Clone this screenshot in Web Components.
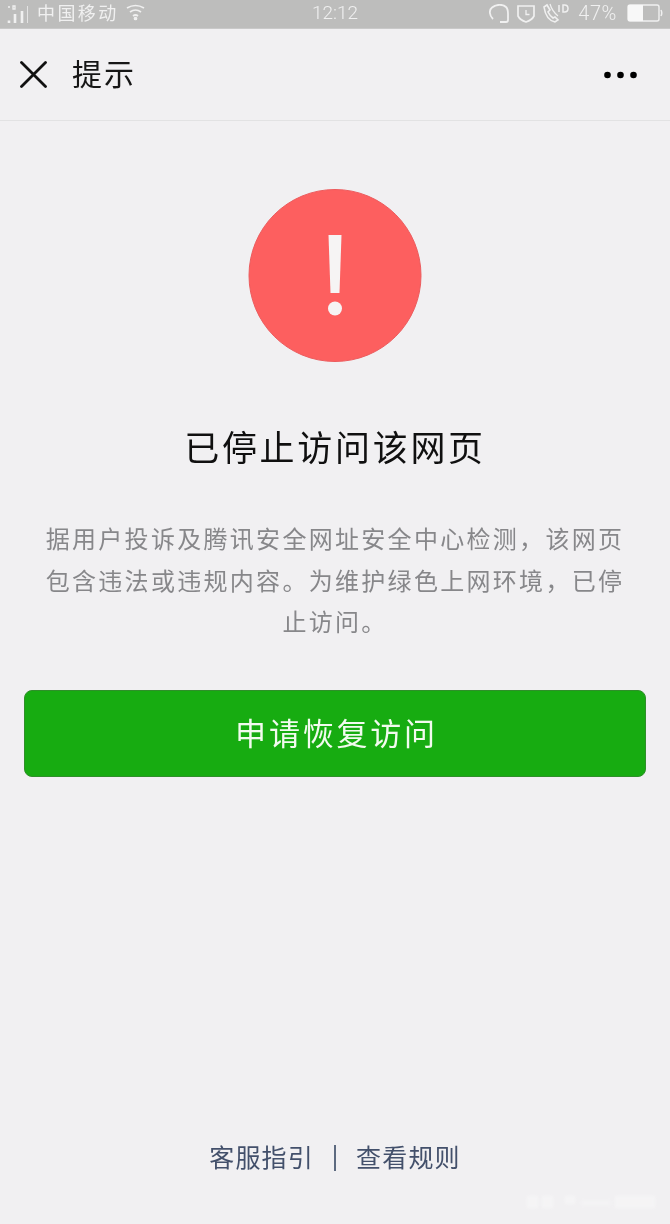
<!DOCTYPE html>
<html lang="zh-CN">
<head>
<meta charset="utf-8">
<title>提示</title>
<style>
    html, body {
        margin: 0;
        height: 100%;
        background: #f1f0f2;
        font-family: "Noto Sans CJK SC", "Liberation Sans", sans-serif;
    }
    msg-page {
        height: 1224px;
    }
</style>
</head>
<body>
<msg-page>
    <status-bar slot="status" carrier="中国移动" time="12:12" battery="47%"></status-bar>
    <nav-bar slot="nav">提示</nav-bar>
    <warn-icon slot="icon"></warn-icon>
    <span slot="title">已停止访问该网页</span>
    <span slot="desc">据用户投诉及腾讯安全网址安全中心检测，该网页包含违法或违规内容。为维护绿色上网环境，已停止访问。</span>
    <primary-button slot="action">申请恢复访问</primary-button>
    <footer-links slot="footer">
        <a>客服指引</a>
        <a>查看规则</a>
    </footer-links>
</msg-page>

<script>
class StatusBar extends HTMLElement {
    constructor() {
        super();
        this.attachShadow({mode: "open"});
        this.shadowRoot.appendChild(StatusBar.TEMPLATE.content.cloneNode(true));
    }

    connectedCallback() {
        this.shadowRoot.querySelector("#carrier").textContent = this.getAttribute("carrier");
        this.shadowRoot.querySelector("#time").textContent = this.getAttribute("time");
        this.shadowRoot.querySelector("#battery").textContent = this.getAttribute("battery");
    }
}
StatusBar.TEMPLATE = document.createElement("template");
StatusBar.TEMPLATE.innerHTML = `
    <style>
        :host {
            display: grid;
            grid-template-columns: 1fr auto 1fr;
            align-items: center;
            height: 29px;
            padding: 0 7px;
            background: #bdbdbc;
            border-bottom: 1px solid #c9c9c9;
            box-sizing: border-box;
            color: #f0f0f0;
            font-size: 18px;
            line-height: 24px;
        }
        .left, .right {
            display: flex;
            align-items: center;
        }
        .right {
            justify-content: flex-end;
        }
        svg {
            display: block;
            fill: none;
            stroke: #f0f0f0;
        }
        #carrier {
            margin: 0 7px 4px 9px;
            letter-spacing: 2.400px;
        }
        #time {
            padding-bottom: 3px;
            font-family: "Roboto", sans-serif;
            font-weight: 300;
            font-size: 19px;
        }
        #battery {
            margin: 0 10px 2px 8px;
            font-family: "Roboto", sans-serif;
            font-weight: 300;
            font-size: 20px;
            letter-spacing: 0.6px;
        }
    </style>
    <div class="left">
        <svg width="21" height="19" viewBox="0 0 21 19">
            <path d="M2 15.500V18M8 9v9M15 6v12" stroke-width="2.600"/>
            <path d="M21 1v17" stroke-width="1.500"/>
            <path d="M1 2h2M6 1h2v3H6z" stroke-width="1.300"/>
        </svg>
        <span id="carrier"></span>
        <svg width="19" height="17" viewBox="0 0 19 17" stroke-width="1.700" style="margin-bottom: 3px">
            <path d="M1 4q8.500-5 17 0"/>
            <path d="M4 8q5.500-4 11 0"/>
            <path d="M7 12q2.500-2 5 0"/>
            <circle cx="9.500" cy="14.500" r="1" fill="#f0f0f0"/>
        </svg>
    </div>
    <span id="time"></span>
    <div class="right">
        <svg width="20" height="19" viewBox="0 0 20 19" stroke-width="1.800" style="margin-bottom: 2px">
            <path d="M4 15C0 11 0 6 3 3.500 7 0 14 0 17 3c2.500 2.500 2 6 2 9v4q0 2-2 2h-6"/>
        </svg>
        <svg width="18" height="19" viewBox="0 0 18 19" stroke-width="1.700" style="margin: 0 0 2px 8px">
            <path d="M1 2h16v10q-2 4-8 6-6-2-8-6z"/>
            <path d="M9 6v4.500h3.500" stroke-width="1.300"/>
        </svg>
        <svg width="27" height="20" viewBox="0 0 27 20" stroke-width="1.600" style="margin: 0 0 2px 8px">
            <path d="M1 4l3-2 3 5-2 2q2 4 5 6l2-1 3 3-3 2Q3 17 1 4z"/>
            <path d="M7 1q2 7 8 12" stroke-width="1.200"/>
            <path d="M16 2v7M20 2h1.500q3.500 0 3.500 3.500t-3.500 3.500H20z" stroke-width="1.500"/>
        </svg>
        <span id="battery"></span>
        <svg width="36" height="18" viewBox="0 0 36 18" style="margin-bottom: 2px">
            <rect x="1" y="1" width="31" height="16" rx="2" stroke-width="1.400"/>
            <rect x="1" y="1" width="15" height="16" fill="#f8f8f8" stroke="none"/>
            <path d="M34 6q1.500 3 0 6" stroke-width="1.500"/>
        </svg>
    </div>
`;
customElements.define("status-bar", StatusBar);

class NavBar extends HTMLElement {
    constructor() {
        super();
        this.attachShadow({mode: "open"});
        this.shadowRoot.appendChild(NavBar.TEMPLATE.content.cloneNode(true));
    }
}
NavBar.TEMPLATE = document.createElement("template");
NavBar.TEMPLATE.innerHTML = `
    <style>
        :host {
            display: flex;
            align-items: center;
            height: 92px;
            padding: 0 33px 0 20px;
            box-sizing: border-box;
            border-bottom: 1px solid #e2e2e3;
            color: #161616;
            font-size: 30px;
        }
        .title {
            flex: 1;
            margin-left: 25px;
            padding-bottom: 6px;
            letter-spacing: 2px;
        }
        svg {
            display: block;
        }
    </style>
    <svg width="27" height="27" viewBox="0 0 27 27" fill="none" stroke="#111" stroke-width="2.800" stroke-linecap="round">
        <path d="M1.500 1.500l24 24M25.500 1.500l-24 24"/>
    </svg>
    <div class="title"><slot></slot></div>
    <svg width="33" height="8" viewBox="0 0 33 8" fill="#000">
        <circle cx="3.500" cy="4" r="3.300"/>
        <circle cx="16.500" cy="4" r="3.300"/>
        <circle cx="29.500" cy="4" r="3.300"/>
    </svg>
`;
customElements.define("nav-bar", NavBar);

class WarnIcon extends HTMLElement {
    constructor() {
        super();
        this.attachShadow({mode: "open"});
        this.shadowRoot.appendChild(WarnIcon.TEMPLATE.content.cloneNode(true));
    }
}
WarnIcon.TEMPLATE = document.createElement("template");
WarnIcon.TEMPLATE.innerHTML = `
    <style>
        :host {
            display: block;
            width: 174px;
            height: 173px;
        }
        svg {
            display: block;
        }
    </style>
    <svg width="174" height="173" viewBox="0 0 174 173">
        <circle cx="87" cy="86.500" r="86" fill="#fd5f5f" stroke="#ec5c5e" stroke-width="1"/>
        <path d="M80.500 46h13l-2 58h-9z" fill="#f6f4f4"/>
        <circle cx="87" cy="119.500" r="7" fill="#f6f4f4"/>
    </svg>
`;
customElements.define("warn-icon", WarnIcon);

class PrimaryButton extends HTMLElement {
    constructor() {
        super();
        this.attachShadow({mode: "open"});
        this.shadowRoot.appendChild(PrimaryButton.TEMPLATE.content.cloneNode(true));
    }
}
PrimaryButton.TEMPLATE = document.createElement("template");
PrimaryButton.TEMPLATE.innerHTML = `
    <style>
        :host {
            display: flex;
            align-items: center;
            justify-content: center;
            height: 87px;
            padding: 0 0 4px 3px;
            box-sizing: border-box;
            background: #17ac11;
            border: 1px solid #2f8f2a;
            border-radius: 8px;
            color: #f2fbef;
            font-size: 31px;
            letter-spacing: 2.800px;
        }
    </style>
    <slot></slot>
`;
customElements.define("primary-button", PrimaryButton);

class FooterLinks extends HTMLElement {
    constructor() {
        super();
        this.attachShadow({mode: "open"});
        this.shadowRoot.appendChild(FooterLinks.TEMPLATE.content.cloneNode(true));
    }
}
FooterLinks.TEMPLATE = document.createElement("template");
FooterLinks.TEMPLATE.innerHTML = `
    <style>
        :host {
            display: flex;
            justify-content: center;
            align-items: center;
            gap: 20px;
            height: 26px;
            color: #43506b;
            font-size: 25px;
            letter-spacing: 1.200px;
        }
        .sep {
            width: 2px;
            height: 26px;
            background: #5d6a80;
        }
        ::slotted(a) {
            display: block;
            padding-bottom: 4px;
        }
    </style>
    <slot name="first"></slot>
    <div class="sep"></div>
    <slot name="second"></slot>
`;
customElements.define("footer-links", FooterLinks);

class MsgPage extends HTMLElement {
    constructor() {
        super();
        this.attachShadow({mode: "open"});
        this.shadowRoot.appendChild(MsgPage.TEMPLATE.content.cloneNode(true));
    }
}
MsgPage.TEMPLATE = document.createElement("template");
MsgPage.TEMPLATE.innerHTML = `
    <style>
        :host {
            display: flex;
            flex-direction: column;
            position: relative;
            background: #f1f0f2;
            filter: blur(0.35px);
        }
        main {
            flex: 1;
            display: flex;
            flex-direction: column;
            align-items: center;
            padding: 68px 24px 0;
        }
        .title {
            margin-top: 60px;
            color: #101010;
            font-size: 35px;
            line-height: 48px;
            letter-spacing: 2.700px;
        }
        .desc {
            margin-top: 47px;
            width: 584px;
            color: #87878a;
            font-size: 24px;
            line-height: 41.500px;
            letter-spacing: 2.300px;
            text-align: center;
        }
        .action {
            align-self: stretch;
            margin-top: 48px;
        }
        .footer {
            margin-top: auto;
            margin-bottom: 53px;
        }
        /* the faint stamp the reference carries, too blurred to read */
        .stamp {
            position: absolute;
            right: 15px;
            bottom: 15px;
            display: block;
            filter: blur(1.500px);
        }
    </style>
    <slot name="status"></slot>
    <slot name="nav"></slot>
    <main>
        <slot name="icon"></slot>
        <div class="title"><slot name="title"></slot></div>
        <div class="desc"><slot name="desc"></slot></div>
        <div class="action"><slot name="action"></slot></div>
        <div class="footer"><slot name="footer"></slot></div>
    </main>
    <svg class="stamp" width="128" height="14" viewBox="0 0 128 14" fill="#fff" opacity="0.3">
        <rect x="0" y="1" width="11" height="12"/>
        <rect x="15" y="1" width="11" height="12"/>
        <rect x="38" y="1" width="10" height="8"/>
        <rect x="54" y="5" width="30" height="6" opacity="0.6"/>
        <rect x="88" y="1" width="40" height="12"/>
    </svg>
`;
customElements.define("msg-page", MsgPage);

// the two links go in named slots of the footer
document.querySelectorAll("footer-links a").forEach((link, i) => {
    link.slot = i == 0 ? "first" : "second";
});
</script>
</body>
</html>
